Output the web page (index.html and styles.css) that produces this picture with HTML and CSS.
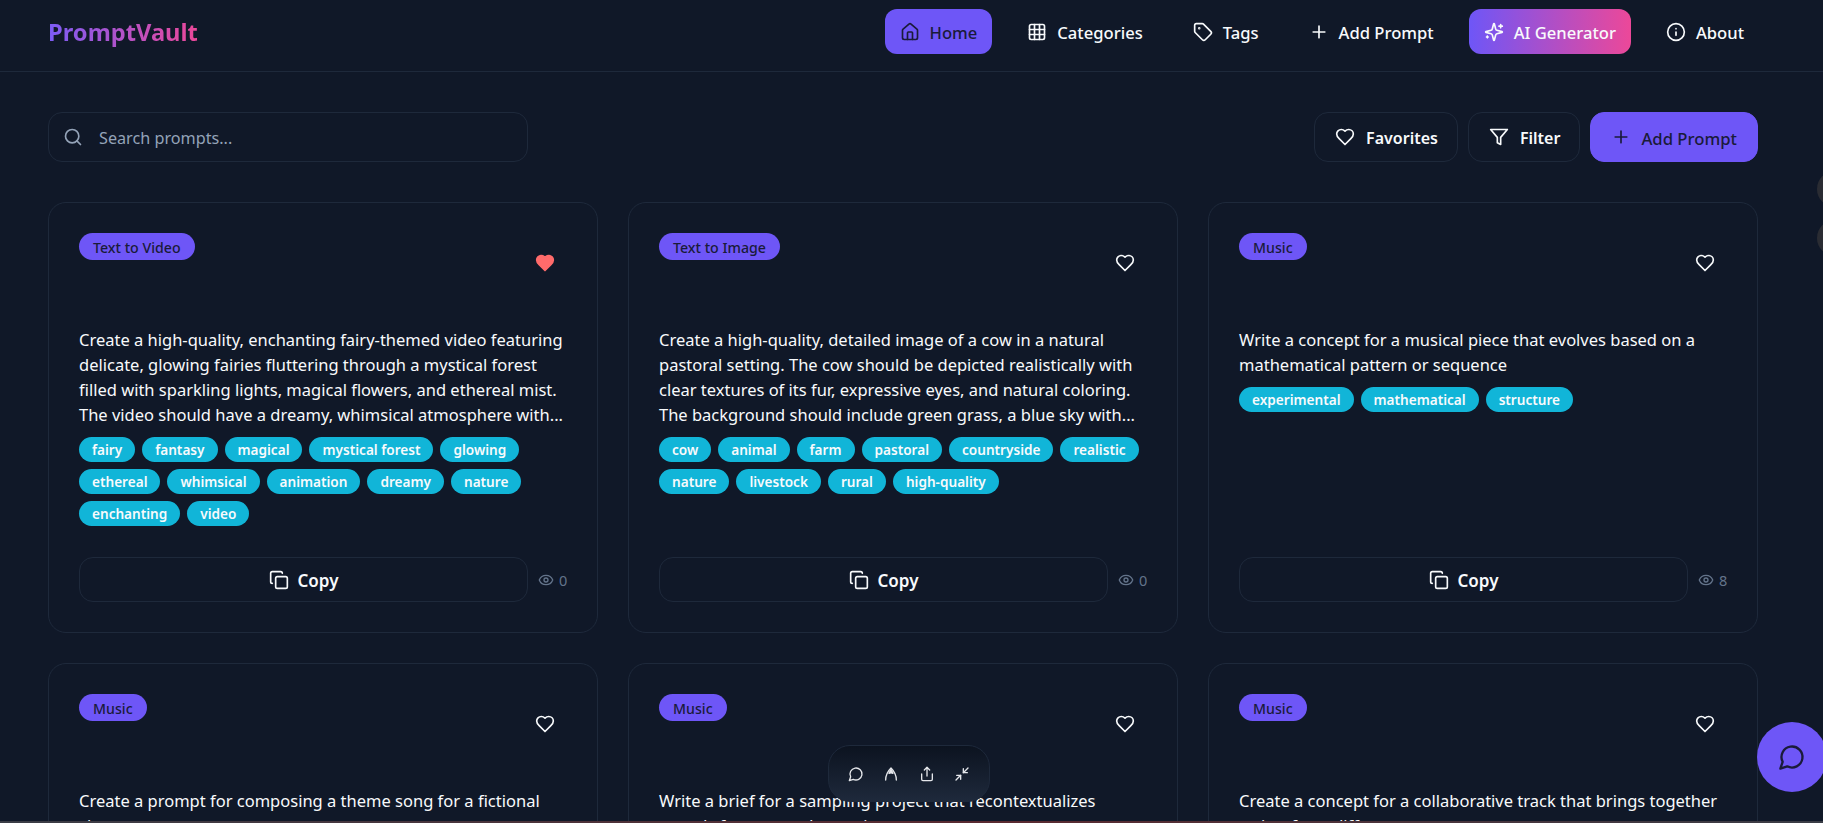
FILE: index.html
```html
<!DOCTYPE html>
<html lang="en">
<head>
<meta charset="UTF-8" />
<meta name="viewport" content="width=device-width, initial-scale=1" />
<title>PromptVault</title>
<link rel="stylesheet" href="styles.css">
</head>
<body>
<svg class="icon-defs" aria-hidden="true">
  <symbol id="i-home" viewBox="0 0 24 24"><path d="M15 21v-8a1 1 0 0 0-1-1h-4a1 1 0 0 0-1 1v8"/><path d="M3 10a2 2 0 0 1 .709-1.528l7-5.999a2 2 0 0 1 2.582 0l7 5.999A2 2 0 0 1 21 10v9a2 2 0 0 1-2 2H5a2 2 0 0 1-2-2z"/></symbol>
  <symbol id="i-grid" viewBox="0 0 24 24"><rect width="18" height="18" x="3" y="3" rx="2"/><path d="M3 9h18M3 15h18M9 3v18M15 3v18"/></symbol>
  <symbol id="i-tag" viewBox="0 0 24 24"><path d="M12.586 2.586A2 2 0 0 0 11.172 2H4a2 2 0 0 0-2 2v7.172a2 2 0 0 0 .586 1.414l8.704 8.704a2.426 2.426 0 0 0 3.42 0l6.58-6.58a2.426 2.426 0 0 0 0-3.42z"/><circle cx="7.5" cy="7.5" r=".5" fill="currentColor"/></symbol>
  <symbol id="i-plus" viewBox="0 0 24 24"><path d="M5 12h14M12 5v14"/></symbol>
  <symbol id="i-sparkles" viewBox="0 0 24 24"><path d="M9.937 15.5A2 2 0 0 0 8.5 14.063l-6.135-1.582a.5.5 0 0 1 0-.962L8.5 9.936A2 2 0 0 0 9.937 8.5l1.582-6.135a.5.5 0 0 1 .963 0L14.063 8.5A2 2 0 0 0 15.5 9.937l6.135 1.581a.5.5 0 0 1 0 .964L15.5 14.063a2 2 0 0 0-1.437 1.437l-1.582 6.135a.5.5 0 0 1-.963 0z"/><path d="M20 3v4M22 5h-4M4 17v2M5 18H3"/></symbol>
  <symbol id="i-info" viewBox="0 0 24 24"><circle cx="12" cy="12" r="10"/><path d="M12 16v-4M12 8h.01"/></symbol>
  <symbol id="i-search" viewBox="0 0 24 24"><circle cx="11" cy="11" r="8"/><path d="m21 21-4.3-4.3"/></symbol>
  <symbol id="i-heart" viewBox="0 0 24 24"><path d="M19 14c1.49-1.46 3-3.21 3-5.5A5.5 5.5 0 0 0 16.5 3c-1.76 0-3 .5-4.5 2-1.5-1.5-2.74-2-4.5-2A5.5 5.5 0 0 0 2 8.5c0 2.3 1.5 4.05 3 5.5l7 7Z"/></symbol>
  <symbol id="i-filter" viewBox="0 0 24 24"><polygon points="22 3 2 3 10 12.46 10 19 14 21 14 12.46 22 3"/></symbol>
  <symbol id="i-copy" viewBox="0 0 24 24"><rect width="14" height="14" x="8" y="8" rx="2"/><path d="M4 16c-1.1 0-2-.9-2-2V4c0-1.1.9-2 2-2h10c1.1 0 2 .9 2 2"/></symbol>
  <symbol id="i-eye" viewBox="0 0 24 24"><path d="M2.062 12.348a1 1 0 0 1 0-.696 10.75 10.75 0 0 1 19.876 0 1 1 0 0 1 0 .696 10.75 10.75 0 0 1-19.876 0"/><circle cx="12" cy="12" r="3"/></symbol>
  <symbol id="i-chat" viewBox="0 0 24 24"><path d="M7.9 20A9 9 0 1 0 4 16.1L2 22Z"/></symbol>
  <symbol id="i-nib" viewBox="0 0 24 24"><path d="M4 21c0-7 3-13 8-18 5 5 8 11 8 18"/><path d="M12 5l-3 6c2-.8 4-.8 6 0z" fill="currentColor"/></symbol>
  <symbol id="i-share" viewBox="0 0 24 24"><path d="M4 12v8a2 2 0 0 0 2 2h12a2 2 0 0 0 2-2v-8"/><path d="m16 6-4-4-4 4"/><path d="M12 2v13"/></symbol>
  <symbol id="i-shrink" viewBox="0 0 24 24"><path d="m14 10 7-7"/><path d="M20 10h-6V4"/><path d="m3 21 7-7"/><path d="M4 14h6v6"/></symbol>
</svg>

<nav class="navbar">
  <a class="logo">PromptVault</a>
  <div class="nav-links">
    <a class="nav-link active"><svg class="icon"><use href="#i-home"/></svg>Home</a>
    <a class="nav-link"><svg class="icon"><use href="#i-grid"/></svg>Categories</a>
    <a class="nav-link"><svg class="icon"><use href="#i-tag"/></svg>Tags</a>
    <a class="nav-link"><svg class="icon"><use href="#i-plus"/></svg>Add Prompt</a>
    <a class="nav-link ai"><svg class="icon"><use href="#i-sparkles"/></svg>AI Generator</a>
    <a class="nav-link"><svg class="icon"><use href="#i-info"/></svg>About</a>
  </div>
</nav>

<main class="content">
  <div class="toolbar">
    <div class="search">
      <svg class="icon"><use href="#i-search"/></svg>
      <span>Search prompts...</span>
    </div>
    <div class="toolbar-actions">
      <button class="btn"><svg class="icon"><use href="#i-heart"/></svg>Favorites</button>
      <button class="btn"><svg class="icon"><use href="#i-filter"/></svg>Filter</button>
      <button class="btn primary"><svg class="icon"><use href="#i-plus"/></svg>Add Prompt</button>
    </div>
  </div>

  <div class="cards">
    <article class="card">
      <div class="card-head">
        <span class="category">Text to Video</span>
        <button class="fav liked"><svg class="icon"><use href="#i-heart"/></svg></button>
      </div>
      <p class="desc">Create a high-quality, enchanting fairy-themed video featuring delicate, glowing fairies fluttering through a mystical forest filled with sparkling lights, magical flowers, and ethereal mist. The video should have a dreamy, whimsical atmosphere with...</p>
      <div class="chips">
        <span class="chip">fairy</span><span class="chip">fantasy</span><span class="chip">magical</span><span class="chip">mystical forest</span><span class="chip">glowing</span><span class="chip">ethereal</span><span class="chip">whimsical</span><span class="chip">animation</span><span class="chip">dreamy</span><span class="chip">nature</span><span class="chip">enchanting</span><span class="chip">video</span>
      </div>
      <div class="card-foot">
        <button class="copy"><svg class="icon"><use href="#i-copy"/></svg>Copy</button>
        <span class="views"><svg class="icon"><use href="#i-eye"/></svg>0</span>
      </div>
    </article>

    <article class="card">
      <div class="card-head">
        <span class="category">Text to Image</span>
        <button class="fav"><svg class="icon"><use href="#i-heart"/></svg></button>
      </div>
      <p class="desc">Create a high-quality, detailed image of a cow in a natural pastoral setting. The cow should be depicted realistically with clear textures of its fur, expressive eyes, and natural coloring. The background should include green grass, a blue sky with...</p>
      <div class="chips">
        <span class="chip">cow</span><span class="chip">animal</span><span class="chip">farm</span><span class="chip">pastoral</span><span class="chip">countryside</span><span class="chip">realistic</span><span class="chip">nature</span><span class="chip">livestock</span><span class="chip">rural</span><span class="chip">high-quality</span>
      </div>
      <div class="card-foot">
        <button class="copy"><svg class="icon"><use href="#i-copy"/></svg>Copy</button>
        <span class="views"><svg class="icon"><use href="#i-eye"/></svg>0</span>
      </div>
    </article>

    <article class="card">
      <div class="card-head">
        <span class="category">Music</span>
        <button class="fav"><svg class="icon"><use href="#i-heart"/></svg></button>
      </div>
      <p class="desc">Write a concept for a musical piece that evolves based on a mathematical pattern or sequence</p>
      <div class="chips">
        <span class="chip">experimental</span><span class="chip">mathematical</span><span class="chip">structure</span>
      </div>
      <div class="card-foot">
        <button class="copy"><svg class="icon"><use href="#i-copy"/></svg>Copy</button>
        <span class="views"><svg class="icon"><use href="#i-eye"/></svg>8</span>
      </div>
    </article>

    <article class="card">
      <div class="card-head">
        <span class="category">Music</span>
        <button class="fav"><svg class="icon"><use href="#i-heart"/></svg></button>
      </div>
      <p class="desc">Create a prompt for composing a theme song for a fictional character or story</p>
    </article>

    <article class="card">
      <div class="card-head">
        <span class="category">Music</span>
        <button class="fav"><svg class="icon"><use href="#i-heart"/></svg></button>
      </div>
      <p class="desc">Write a brief for a sampling project that recontextualizes sounds from everyday environments</p>
    </article>

    <article class="card">
      <div class="card-head">
        <span class="category">Music</span>
        <button class="fav"><svg class="icon"><use href="#i-heart"/></svg></button>
      </div>
      <p class="desc">Create a concept for a collaborative track that brings together artists from different genres</p>
    </article>
  </div>
</main>

<div class="float-bar">
  <svg class="icon"><use href="#i-chat"/></svg>
  <svg class="icon"><use href="#i-nib"/></svg>
  <svg class="icon"><use href="#i-share"/></svg>
  <svg class="icon"><use href="#i-shrink"/></svg>
</div>

<button class="chat-fab"><svg class="icon"><use href="#i-chat"/></svg></button>
<span class="edge-dot one"></span>
<span class="edge-dot two"></span>
<div class="bottom-line"></div>
</body>
</html>
```

FILE: styles.css
```css
html, body {
  height: 100%;
  margin: 0;
  overflow: hidden;
}
body {
  background: #101828;
  color: #f8fafc;
  font-family: "Noto Sans", sans-serif;
  font-size: 16.5px;
}
button {
  font: inherit;
  color: inherit;
  background: none;
  border: 0;
  padding: 0;
}
.icon-defs {
  display: none;
}
.icon {
  width: 20px;
  height: 20px;
  flex: none;
  fill: none;
  stroke: currentColor;
  stroke-width: 2;
  stroke-linecap: round;
  stroke-linejoin: round;
}

/* top bar */
.navbar {
  height: 63px;
  padding: 0 64px 8px 48px;
  border-bottom: 1px solid #1e293b;
  display: flex;
  align-items: center;
  justify-content: space-between;
}
.logo {
  font-size: 23.7px;
  font-weight: 700;
  background: linear-gradient(90deg, #7c5cf6, #ec4899);
  -webkit-background-clip: text;
  background-clip: text;
  color: transparent;
}
.nav-links {
  display: flex;
  gap: 20px;
}
.nav-link {
  height: 45px;
  box-sizing: border-box;
  padding: 2px 15px 0;
  display: flex;
  align-items: center;
  gap: 10px;
  border-radius: 12px;
  font-size: 16.6px;
  font-weight: 500;
  white-space: nowrap;
}
.nav-link .icon {
  margin-top: -2px;
}
.nav-link.active {
  background: #6e56f7;
  color: #1a1b3a;
}
.nav-link.ai {
  background: linear-gradient(90deg, #6e56f7, #ec4899);
}

/* search + actions */
.content {
  padding: 40px 65px 0 48px;
}
.toolbar {
  display: flex;
  justify-content: space-between;
  margin-bottom: 40px;
}
.search {
  width: 480px;
  height: 50px;
  box-sizing: border-box;
  padding: 2px 14px 0;
  display: flex;
  align-items: center;
  gap: 16px;
  border: 1px solid #1e293b;
  border-radius: 14px;
  color: #94a3b8;
  font-size: 16.2px;
}
.search .icon {
  margin-top: -2px;
}
.toolbar-actions {
  display: flex;
  gap: 10px;
}
.btn {
  height: 50px;
  box-sizing: border-box;
  padding: 2px 19px 0 20px;
  display: flex;
  align-items: center;
  gap: 11px;
  border: 1px solid #1e293b;
  border-radius: 14px;
  font-size: 16px;
  font-weight: 600;
}
.btn .icon {
  margin-top: -2px;
}
.btn.primary {
  padding: 2px 20px 0;
  gap: 10px;
  background: #6e56f7;
  border-color: #6e56f7;
  color: #1a1b3a;
  font-size: 16.7px;
  font-weight: 500;
}

/* prompt cards */
.cards {
  display: grid;
  grid-template-columns: repeat(3, 1fr);
  gap: 30px;
}
.card {
  height: 431px;
  box-sizing: border-box;
  padding: 30px;
  display: flex;
  flex-direction: column;
  border: 1px solid #1e293b;
  border-radius: 18px;
}
.card-head {
  height: 94px;
  display: flex;
  justify-content: space-between;
  align-items: flex-start;
}
.category {
  height: 27px;
  box-sizing: border-box;
  padding: 2px 14px 0;
  display: flex;
  align-items: center;
  border-radius: 14px;
  background: #6e56f7;
  color: #1a1b3a;
  font-size: 14.2px;
  font-weight: 500;
}
.fav {
  padding: 20px 12px 0 0;
  display: flex;
}
.fav.liked .icon {
  fill: #ff6b6b;
  stroke: #ff6b6b;
}
.desc {
  margin: 0 0 10px;
  line-height: 25px;
}
.chips {
  display: flex;
  flex-wrap: wrap;
  gap: 7px;
}
.chip {
  height: 25px;
  padding: 0 13px;
  display: flex;
  align-items: center;
  border-radius: 13px;
  background: #11b5d8;
  font-size: 13.6px;
  font-weight: 600;
}
.card-foot {
  margin-top: auto;
  display: flex;
  align-items: center;
  gap: 10px;
}
.copy {
  flex: 1;
  height: 45px;
  box-sizing: border-box;
  padding-top: 2px;
  display: flex;
  align-items: center;
  justify-content: center;
  gap: 9px;
  border: 1px solid #1e293b;
  border-radius: 14px;
  font-size: 17px;
  font-weight: 600;
}
.copy .icon {
  margin-top: -2px;
}
.views {
  width: 29px;
  display: flex;
  align-items: center;
  gap: 5px;
  color: #64748b;
  font-size: 14.5px;
}
.views .icon {
  width: 16px;
  height: 16px;
}

/* things floating over the page */
.float-bar {
  position: fixed;
  left: 828px;
  top: 745px;
  width: 162px;
  height: 57px;
  box-sizing: border-box;
  padding: 0 19px;
  display: flex;
  align-items: center;
  justify-content: space-between;
  border: 1px solid #1e293b;
  border-radius: 22px;
  background: linear-gradient(180deg, #0c1320, #1e293b);
  color: #e5e7eb;
}
.float-bar .icon {
  width: 16px;
  height: 16px;
}
.chat-fab {
  position: fixed;
  left: 1757px;
  top: 722px;
  width: 70px;
  height: 70px;
  display: flex;
  align-items: center;
  justify-content: center;
  border-radius: 50%;
  background: #6e56f7;
  color: #1a1b3a;
}
.chat-fab .icon {
  width: 28px;
  height: 28px;
}
.edge-dot {
  position: fixed;
  left: 1817px;
  width: 36px;
  height: 36px;
  border-radius: 50%;
  background: #2a2c33;
}
.edge-dot.one {
  top: 171px;
}
.edge-dot.two {
  top: 220px;
}
.bottom-line {
  position: fixed;
  left: 0;
  right: 0;
  bottom: 0;
  height: 2px;
  background: linear-gradient(90deg, #3a3d46, #5a2a30 55%, #3a3d46);
}
```
